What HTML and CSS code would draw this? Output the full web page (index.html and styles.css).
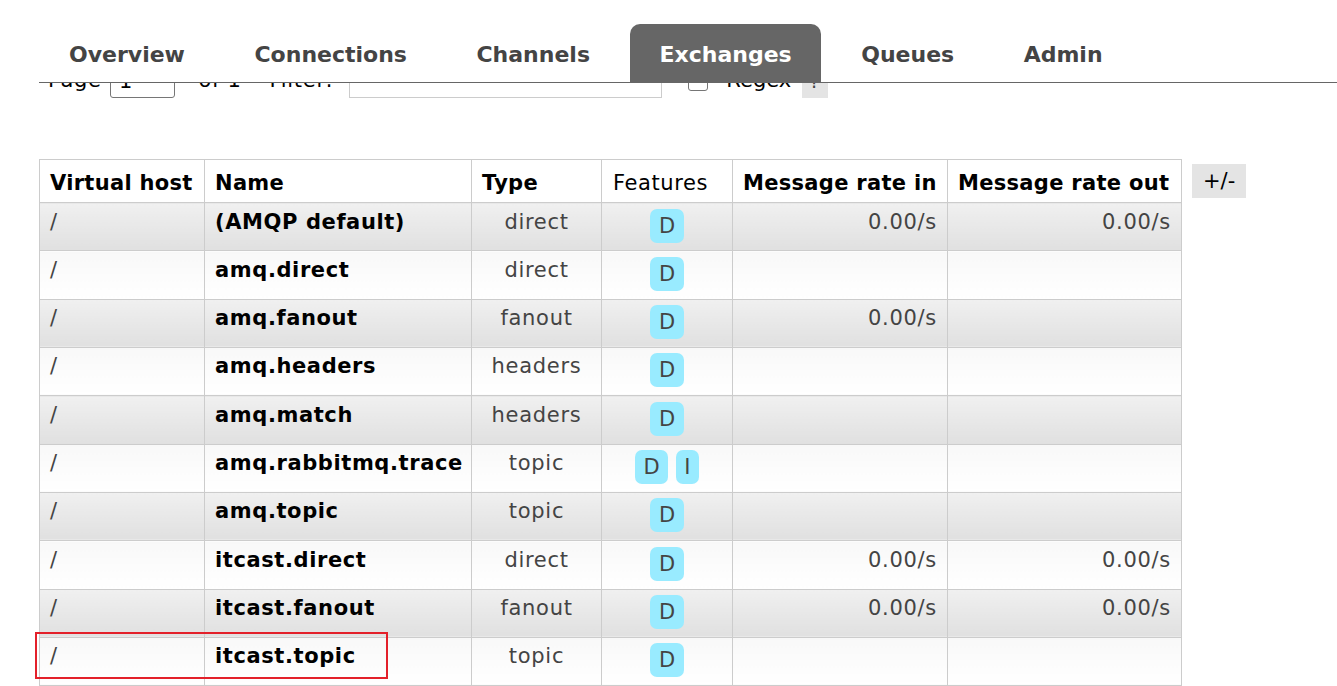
FILE: index.html
```
<!DOCTYPE html>
<html>
<head>
<meta charset="utf-8">
<title>Exchanges</title>
<link rel="stylesheet" href="styles.css">
</head>
<body>
<header class="top">
  <ul class="tabs">
    <li class="tab">Overview</li>
    <li class="tab">Connections</li>
    <li class="tab">Channels</li>
    <li class="tab active">Exchanges</li>
    <li class="tab">Queues</li>
    <li class="tab">Admin</li>
  </ul>
</header>
<main class="main">
  <div class="pager">
    <span class="lbl">Page</span>
    <input class="page-input" type="text" value="1">
    <span class="lbl of">of 1</span>
    <span class="lbl filter">- Filter:</span>
    <input class="filter-input" type="text">
    <input class="regex-box" type="checkbox">
    <span class="lbl regex">Regex</span>
    <span class="help">?</span>
  </div>
  <div class="list-wrap">
    <table class="list">
      <colgroup>
        <col class="col-vhost">
        <col class="col-name">
        <col class="col-type">
        <col class="col-feat">
        <col class="col-in">
        <col class="col-out">
      </colgroup>
      <thead>
        <tr>
          <th>Virtual host</th>
          <th>Name</th>
          <th>Type</th>
          <th class="plain">Features</th>
          <th>Message rate in</th>
          <th>Message rate out</th>
        </tr>
      </thead>
      <tbody>
        <tr class="alt1"><td>/</td><td class="name">(AMQP default)</td><td class="c">direct</td><td class="c"><abbr class="feat">D</abbr></td><td class="r">0.00/s</td><td class="r">0.00/s</td></tr>
        <tr class="alt2"><td>/</td><td class="name">amq.direct</td><td class="c">direct</td><td class="c"><abbr class="feat">D</abbr></td><td class="r"></td><td class="r"></td></tr>
        <tr class="alt1"><td>/</td><td class="name">amq.fanout</td><td class="c">fanout</td><td class="c"><abbr class="feat">D</abbr></td><td class="r">0.00/s</td><td class="r"></td></tr>
        <tr class="alt2"><td>/</td><td class="name">amq.headers</td><td class="c">headers</td><td class="c"><abbr class="feat">D</abbr></td><td class="r"></td><td class="r"></td></tr>
        <tr class="alt1"><td>/</td><td class="name">amq.match</td><td class="c">headers</td><td class="c"><abbr class="feat">D</abbr></td><td class="r"></td><td class="r"></td></tr>
        <tr class="alt2"><td>/</td><td class="name">amq.rabbitmq.trace</td><td class="c">topic</td><td class="c"><abbr class="feat">D</abbr> <abbr class="feat">I</abbr></td><td class="r"></td><td class="r"></td></tr>
        <tr class="alt1"><td>/</td><td class="name">amq.topic</td><td class="c">topic</td><td class="c"><abbr class="feat">D</abbr></td><td class="r"></td><td class="r"></td></tr>
        <tr class="alt2"><td>/</td><td class="name">itcast.direct</td><td class="c">direct</td><td class="c"><abbr class="feat">D</abbr></td><td class="r">0.00/s</td><td class="r">0.00/s</td></tr>
        <tr class="alt1"><td>/</td><td class="name">itcast.fanout</td><td class="c">fanout</td><td class="c"><abbr class="feat">D</abbr></td><td class="r">0.00/s</td><td class="r">0.00/s</td></tr>
        <tr class="alt2"><td>/</td><td class="name">itcast.topic</td><td class="c">topic</td><td class="c"><abbr class="feat">D</abbr></td><td class="r"></td><td class="r"></td></tr>
      </tbody>
    </table>
    <span class="toggle">+/-</span>
  </div>
  <div class="highlight"></div>
</main>
</body>
</html>
```
FILE: styles.css
```
html, body {
  margin: 0;
  padding: 0;
}
body {
  font-family: "DejaVu Sans", Verdana, sans-serif;
  font-size: 21px;
  color: #444;
  background: #fff;
  overflow: hidden;
}

/* fixed top navigation, lies over the scrolled content */
.top {
  position: fixed;
  top: 0;
  left: 0;
  right: 0;
  background: #fff;
  z-index: 10;
}
.tabs {
  list-style: none;
  margin: 0 0 0 39px;
  padding: 24px 0 0 1px;
  display: flex;
  border-bottom: 1px solid #666;
}
.tab {
  font-size: 22px;
  font-weight: bold;
  color: #444;
  line-height: 30px;
  height: 30px;
  padding: 16px 29px 12px;
  margin-right: 11.5px;
  border-radius: 10px 10px 0 0;
}
.tab.active {
  background: #666;
  color: #fff;
}

.main {
  position: relative;
  padding: 62px 0 0 39px;
}

/* pager row, mostly hidden under the nav */
.pager {
  height: 36px;
  line-height: 36px;
  padding-left: 9px;
  white-space: nowrap;
  color: #000;
  letter-spacing: 0.7px;
}
.pager input {
  font-family: inherit;
  font-size: 21px;
  vertical-align: middle;
  box-sizing: border-box;
  margin: 0;
}
.page-input {
  width: 65px;
  height: 34px;
  margin-left: 1px !important;
  border: 1px solid #767676;
  border-radius: 3px;
  padding: 0 8px;
}
.of { margin-left: 16px; }
.filter { margin-left: 5px; }
.filter-input {
  width: 313px;
  height: 34px;
  margin-left: 8px !important;
  border: 1px solid #ccc;
  border-radius: 0;
}
.regex-box {
  appearance: none;
  -webkit-appearance: none;
  width: 20px;
  height: 20px;
  border: 1px solid #767676;
  border-radius: 3px;
  margin-left: 19px !important;
  background: #fff;
}
.regex { margin-left: 11px; letter-spacing: 0; }
.help {
  display: inline-block;
  vertical-align: middle;
  width: 26px;
  height: 34px;
  line-height: 34px;
  margin-left: 3px;
  text-align: center;
  background: #e4e4e4;
  color: #444;
  font-size: 20px;
  letter-spacing: 0;
}

.list-wrap {
  display: flex;
  align-items: flex-start;
  gap: 10px;
  margin-top: 61px;
}
.list {
  border-collapse: collapse;
  table-layout: fixed;
  width: 1142px;
}
.col-vhost { width: 165px; }
.col-name { width: 267px; }
.col-type { width: 130px; }
.col-feat { width: 131px; }
.col-in { width: 215px; }
.col-out { width: 234px; }

.list th,
.list td {
  border: 1px solid #ccc;
  white-space: nowrap;
  overflow: hidden;
}
.list th {
  background: #fff;
  color: #000;
  font-weight: bold;
  text-align: left;
  line-height: 24px;
  letter-spacing: 0.3px;
  padding: 11px 10px 7px 10px;
}
.list th.plain { font-weight: normal; letter-spacing: 0.6px; padding-left: 11px; }
.list td {
  vertical-align: top;
  line-height: 26px;
  letter-spacing: 0.7px;
  padding: 5.5px 10px 7.83px 10px;
}
.list .c { text-align: center; padding-left: 4px; padding-right: 4px; }
.list .r { text-align: right; }
.list td.name {
  font-weight: bold;
  color: #000;
  letter-spacing: 0.6px;
}
.alt1 td { background: linear-gradient(#f0f0f0, #e0e0e0); }
.alt2 td { background: linear-gradient(#f8f8f8, #ffffff); }

.feat {
  display: inline-block;
  vertical-align: top;
  background: #99ebff;
  color: #444;
  border-radius: 7px;
  padding: 2px 8.5px;
  line-height: 30px;
  letter-spacing: 0;
  text-decoration: none;
}

.toggle {
  margin-top: 5px;
  display: inline-block;
  height: 34px;
  line-height: 34px;
  padding: 0 11px;
  background: #e4e4e4;
  color: #000;
}

/* annotation drawn over the last row */
.highlight {
  position: absolute;
  left: 35px;
  top: 632px;
  width: 349px;
  height: 43px;
  border: 2px solid #e3202a;
}
```
